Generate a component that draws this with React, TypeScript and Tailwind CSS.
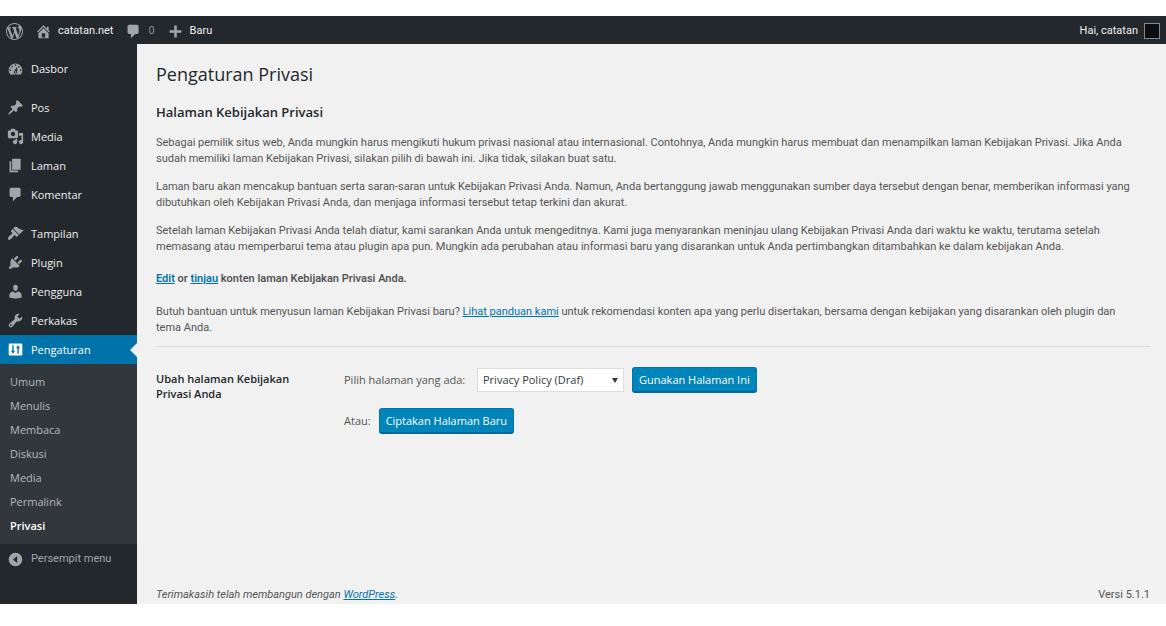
import type { ReactNode } from 'react';
import clsx from 'clsx';

const icons = {
  wordpress:
    'M20 10c0-5.51-4.49-10-10-10C4.48 0 0 4.49 0 10c0 5.52 4.48 10 10 10 5.51 0 10-4.48 10-10zM7.78 15.37L4.37 6.22c.55-.02 1.17-.08 1.17-.08.5-.06.44-1.13-.06-1.11 0 0-1.45.11-2.37.11-.18 0-.37 0-.58-.01C4.12 2.69 6.87 1.11 10 1.11c2.33 0 4.45.87 6.05 2.34-.68-.11-1.65.39-1.65 1.58 0 .74.45 1.36.9 2.1.35.61.55 1.36.55 2.46 0 1.49-1.4 5-1.4 5l-3.03-8.37c.54-.02.82-.17.82-.17.5-.05.44-1.25-.06-1.22 0 0-1.44.12-2.38.12-.87 0-2.33-.12-2.33-.12-.5-.03-.56 1.2-.06 1.22l.92.08 1.26 3.41zM17.41 10c.24-.64.74-1.87.43-4.25.7 1.29 1.05 2.71 1.05 4.25 0 3.29-1.73 6.24-4.4 7.78.97-2.59 1.94-5.2 2.92-7.78zM6.1 18.09C3.12 16.65 1.11 13.53 1.11 10c0-1.3.23-2.48.72-3.59C3.25 10.3 4.67 14.2 6.1 18.09zm4.03-6.63l2.58 6.98c-.86.29-1.76.45-2.71.45-.79 0-1.57-.11-2.29-.33.81-2.38 1.62-4.74 2.42-7.1z',
  home: 'M16 8.5l1.53 1.53-1.06 1.06L10 4.6l-6.47 6.49-1.06-1.06L10 2.5l4 4v-2h2v4zm-6-2.46l6 5.99V18H4v-5.97zM12 17v-5H8v5h4z',
  comment: 'M5 2h9c1.1 0 2 .9 2 2v7c0 1.1-.9 2-2 2h-2l-5 5v-5H5c-1.1 0-2-.9-2-2V4c0-1.1.9-2 2-2z',
  plus: 'M17 8.5v3h-5.5V17h-3v-5.5H3v-3h5.5V3h3v5.5H17z',
  dashboard:
    'M3.76 17h12.48c1.1-1.37 1.76-3.11 1.76-5 0-4.42-3.58-8-8-8s-8 3.58-8 8c0 1.89.66 3.63 1.76 5zM10 5c.55 0 1 .45 1 1s-.45 1-1 1-1-.45-1-1 .45-1 1-1zM6 7c.55 0 1 .45 1 1s-.45 1-1 1-1-.45-1-1 .45-1 1-1zm8 0c.55 0 1 .45 1 1s-.45 1-1 1-1-.45-1-1 .45-1 1-1zm-5.37 5.55L12 8v6c0 1.1-.9 2-2 2s-2-.9-2-2c0-.57.24-1.08.63-1.45zM4 11c.55 0 1 .45 1 1s-.45 1-1 1-1-.45-1-1 .45-1 1-1zm12 0c.55 0 1 .45 1 1s-.45 1-1 1-1-.45-1-1 .45-1 1-1zm-5 3c0-.55-.45-1-1-1s-1 .45-1 1 .45 1 1 1 1-.45 1-1z',
  pin: 'M10.44 3.02l1.82-1.82 6.36 6.35-1.83 1.82c-1.05-.68-2.48-.57-3.41.36l-.75.75c-.92.93-1.04 2.35-.35 3.41l-1.83 1.82-2.41-2.41-2.8 2.79c-.42.42-3.38 2.71-3.8 2.29s1.86-3.39 2.28-3.81l2.79-2.79L4.1 9.36l1.83-1.82c1.05.69 2.48.57 3.4-.36l.75-.75c.93-.92 1.05-2.35.36-3.41z',
  media:
    'M13 11V4c0-.55-.45-1-1-1h-1.67L9 1H5L3.67 3H2c-.55 0-1 .45-1 1v7c0 .55.45 1 1 1h10c.55 0 1-.45 1-1zM7 4.5c1.38 0 2.5 1.12 2.5 2.5S8.38 9.5 7 9.5 4.5 8.38 4.5 7 5.62 4.5 7 4.5zM14 6h5v10.5c0 1.38-1.12 2.5-2.5 2.5S14 17.88 14 16.5s1.12-2.5 2.5-2.5c.17 0 .34.02.5.05V9h-3V6zm-4 8.05V13h2v3.5c0 1.38-1.12 2.5-2.5 2.5S7 17.88 7 16.5 8.12 14 9.5 14c.17 0 .34.02.5.05z',
  page: 'M6 15V2h10v13H6zm-1 1h8v2H3V5h2v11z',
  appearance:
    'M14.48 11.06L7.41 3.99l1.5-1.5c.5-.56 2.3-.47 3.51.32 1.21.8 1.43 1.28 2.91 2.1 1.18.64 2.45 1.26 4.45.85zm-.71.71L6.7 4.7 4.93 6.47c-.39.39-.39 1.02 0 1.41l1.06 1.06c.39.39.39 1.03 0 1.42-.6.6-1.43 1.11-2.21 1.69-.35.26-.7.53-1.01.84C1.43 14.23.4 16.08 1.4 17.07c.99 1 2.84-.03 4.18-1.36.31-.31.58-.66.85-1.02.57-.78 1.08-1.61 1.69-2.21.39-.39 1.02-.39 1.41 0l1.06 1.06c.39.39 1.02.39 1.41 0z',
  plugin:
    'M13.11 4.36L9.87 7.6 8 5.73l3.24-3.24c.35-.34 1.05-.2 1.56.32.52.51.66 1.21.31 1.55zm-8 1.77l.91-1.12 9.01 9.01-1.19.84c-.71.71-2.63 1.16-3.82 1.16H6.14L4.9 17.26c-.59.59-1.54.59-2.12 0-.59-.58-.59-1.53 0-2.12l1.24-1.24v-3.88c0-1.13.4-3.19 1.09-3.89zm7.26 3.97l3.24-3.24c.34-.35 1.04-.21 1.55.31.52.51.66 1.21.31 1.55l-3.24 3.25z',
  users:
    'M10 9.25c-2.27 0-2.73-3.44-2.73-3.44C7 4.02 7.82 2 9.97 2c2.16 0 2.98 2.02 2.71 3.81 0 0-.41 3.44-2.68 3.44zm0 2.57L12.72 10c2.39 0 4.52 2.33 4.52 4.53v2.49s-3.65 1.13-7.24 1.13c-3.65 0-7.24-1.13-7.24-1.13v-2.49c0-2.25 1.94-4.48 4.47-4.48z',
  tools:
    'M16.68 9.77c-1.34 1.34-3.3 1.67-4.95.99l-5.41 6.52c-.99.99-2.59.99-3.58 0s-.99-2.59 0-3.57l6.52-5.42c-.68-1.65-.35-3.61.99-4.95 1.28-1.28 3.12-1.62 4.72-1.06l-2.89 2.89 2.82 2.82 2.86-2.87c.53 1.58.18 3.39-1.08 4.65zM3.81 16.21c.4.39 1.04.39 1.43 0 .4-.4.4-1.04 0-1.43-.39-.4-1.03-.4-1.43 0-.39.39-.39 1.03 0 1.43z',
  settings:
    'M18 16V4c0-.55-.45-1-1-1H3c-.55 0-1 .45-1 1v12c0 .55.45 1 1 1h14c.55 0 1-.45 1-1zM7.8 11.5h1.7L7 15l-2.5-3.5h1.7V5h1.6v6.5zm6-3V15h-1.6V8.5h-1.7L13 5l2.5 3.5h-1.7z',
  collapse: 'M10 2a8 8 0 1 0 0 16 8 8 0 0 0 0-16zm2 4v8l-5-4z',
};

type IconName = keyof typeof icons;

function Icon({ name, className }: { name: IconName; className?: string }) {
  return (
    <svg
      viewBox="0 0 20 20"
      className={clsx('size-[17px] shrink-0', className)}
      fill="currentColor"
      fillRule="evenodd"
      aria-hidden="true"
    >
      <path d={icons[name]} />
    </svg>
  );
}

const menuGroups: { label: string; icon: IconName; active?: boolean }[][] = [
  [{ label: 'Dasbor', icon: 'dashboard' }],
  [
    { label: 'Pos', icon: 'pin' },
    { label: 'Media', icon: 'media' },
    { label: 'Laman', icon: 'page' },
    { label: 'Komentar', icon: 'comment' },
  ],
  [
    { label: 'Tampilan', icon: 'appearance' },
    { label: 'Plugin', icon: 'plugin' },
    { label: 'Pengguna', icon: 'users' },
    { label: 'Perkakas', icon: 'tools' },
    { label: 'Pengaturan', icon: 'settings', active: true },
  ],
];

const submenu = ['Umum', 'Menulis', 'Membaca', 'Diskusi', 'Media', 'Permalink', 'Privasi'];

function AdminBar() {
  return (
    <header className="flex h-7 items-center justify-between bg-[#23282d] px-1.5 pt-0.5 text-[#eee]">
      <div className="flex items-center">
        <a href="#" aria-label="WordPress" className="text-[#a0a5aa]">
          <Icon name="wordpress" />
        </a>
        <a href="#" className="ml-3 flex items-center gap-1.5">
          <Icon name="home" className="text-[#a0a5aa]" />
          catatan.net
        </a>
        <a href="#" className="ml-3 flex items-center gap-1.5 text-[#8a8f94]">
          <Icon name="comment" className="text-[#a0a5aa]" />
          0
        </a>
        <a href="#" className="ml-3 flex items-center gap-1.5">
          <Icon name="plus" className="text-[#a0a5aa]" />
          Baru
        </a>
      </div>
      <a href="#" className="flex items-center gap-1.5">
        Hai, catatan
        <span className="size-4 border border-[#82878c] bg-[#0c0d0e]" />
      </a>
    </header>
  );
}

function Sidebar() {
  return (
    <nav className="w-[137px] shrink-0 bg-[#23282d] pt-2.5 text-[#eee]">
      <div className="flex flex-col gap-2.5 font-['Open_Sans',sans-serif]">
        {menuGroups.map((group, i) => (
          <ul key={i}>
            {group.map((item) => (
              <li key={item.label}>
                <a
                  href="#"
                  className={clsx(
                    'relative flex h-[29px] items-center gap-[7px] pl-[7px]',
                    item.active && 'bg-[#0073aa] text-white',
                  )}
                >
                  <Icon name={item.icon} className={clsx(!item.active && 'text-[#a0a5aa]')} />
                  {item.label}
                  {item.active && (
                    <span className="absolute right-0 top-2 border-y-[7px] border-r-[7px] border-y-transparent border-r-[#f1f1f1]" />
                  )}
                </a>
              </li>
            ))}
          </ul>
        ))}
      </div>
      <ul className="bg-[#32373c] py-1.5 text-[#b4b9be] font-['Open_Sans',sans-serif]">
        {submenu.map((label) => (
          <li key={label}>
            <a
              href="#"
              className={clsx('flex h-6 items-center pl-2.5', label === 'Privasi' && 'font-semibold text-white')}
            >
              {label}
            </a>
          </li>
        ))}
      </ul>
      <button type="button" className="flex h-[30px] items-center gap-[7px] pl-[7px] text-[#a0a5aa]">
        <Icon name="collapse" />
        Persempit menu
      </button>
    </nav>
  );
}

function Link({ children }: { children: ReactNode }) {
  return (
    <a href="#" className="text-[#0073aa] underline">
      {children}
    </a>
  );
}

function PrimaryButton({ children }: { children: ReactNode }) {
  return (
    <button
      type="submit"
      className="h-[25px] rounded-[3px] border border-[#0073aa] border-b-[#006799] bg-[#0085ba] px-1.5 text-white shadow-[0_1px_0_#006799]"
    >
      {children}
    </button>
  );
}

function PolicyForm() {
  return (
    <form className="mt-5 flex items-start font-['Open_Sans',sans-serif]" onSubmit={(e) => e.preventDefault()}>
      <h3 className="mt-1 w-[188px] shrink-0 pr-9 leading-[15px] font-semibold text-[#23282d]">
        Ubah halaman Kebijakan Privasi Anda
      </h3>
      <div className="flex flex-col gap-4">
        <div className="flex items-center gap-2">
          <label htmlFor="policy-page" className="min-w-[125px]">
            Pilih halaman yang ada:
          </label>
          <div className="relative">
            <select
              id="policy-page"
              className="block h-6 w-[147px] appearance-none border border-[#ddd] bg-white pl-[5px] text-[#32373c]"
            >
              <option>Privacy Policy (Draf)</option>
            </select>
            <span className="pointer-events-none absolute right-1.5 top-2.5 border-x-[3px] border-t-[5px] border-x-transparent border-t-[#32373c]" />
          </div>
          <PrimaryButton>Gunakan Halaman Ini</PrimaryButton>
        </div>
        <div className="flex items-center gap-2">
          <span>Atau:</span>
          <PrimaryButton>Ciptakan Halaman Baru</PrimaryButton>
        </div>
      </div>
    </form>
  );
}

export default function App() {
  return (
    <div className="flex min-h-screen flex-col bg-white pt-4 pb-[22px] font-['Roboto','Open_Sans',sans-serif] text-[11px] leading-4">
      <AdminBar />
      <div className="flex flex-1 bg-[#f1f1f1]">
        <Sidebar />
        <div className="flex min-w-0 flex-1 flex-col pl-[19px] pr-4 text-[#555]">
          <main className="flex-1">
            <h1 className="mt-[18px] font-['Open_Sans',sans-serif] text-lg leading-6 font-normal text-[#23282d]">
              Pengaturan Privasi
            </h1>
            <h2 className="mt-4 font-['Open_Sans',sans-serif] text-[13px] leading-5 font-semibold text-[#23282d]">
              Halaman Kebijakan Privasi
            </h2>
            <p className="mt-[13px]">
              Sebagai pemilik situs web, Anda mungkin harus mengikuti hukum privasi nasional atau internasional.
              Contohnya, Anda mungkin harus membuat dan menampilkan laman Kebijakan Privasi. Jika Anda sudah memiliki
              laman Kebijakan Privasi, silakan pilih di bawah ini. Jika tidak, silakan buat satu.
            </p>
            <p className="mt-3">
              Laman baru akan mencakup bantuan serta saran-saran untuk Kebijakan Privasi Anda. Namun, Anda bertanggung
              jawab menggunakan sumber daya tersebut dengan benar, memberikan informasi yang dibutuhkan oleh Kebijakan
              Privasi Anda, dan menjaga informasi tersebut tetap terkini dan akurat.
            </p>
            <p className="mt-3">
              Setelah laman Kebijakan Privasi Anda telah diatur, kami sarankan Anda untuk mengeditnya. Kami juga
              menyarankan meninjau ulang Kebijakan Privasi Anda dari waktu ke waktu, terutama setelah memasang atau
              memperbarui tema atau plugin apa pun. Mungkin ada perubahan atau informasi baru yang disarankan untuk Anda
              pertimbangkan ditambahkan ke dalam kebijakan Anda.
            </p>
            <p className="mt-4 font-semibold">
              <Link>Edit</Link> or <Link>tinjau</Link> konten laman Kebijakan Privasi Anda.
            </p>
            <p className="mt-[17px] pr-4">
              Butuh bantuan untuk menyusun laman Kebijakan Privasi baru? <Link>Lihat panduan kami</Link> untuk
              rekomendasi konten apa yang perlu disertakan, bersama dengan kebijakan yang disarankan oleh plugin dan
              tema Anda.
            </p>
            <hr className="mt-2.5 border-t border-[#ddd]" />
            <PolicyForm />
          </main>
          <footer className="flex justify-between pb-px">
            <p className="italic">
              Terimakasih telah membangun dengan <Link>WordPress</Link>.
            </p>
            <p>Versi 5.1.1</p>
          </footer>
        </div>
      </div>
    </div>
  );
}
